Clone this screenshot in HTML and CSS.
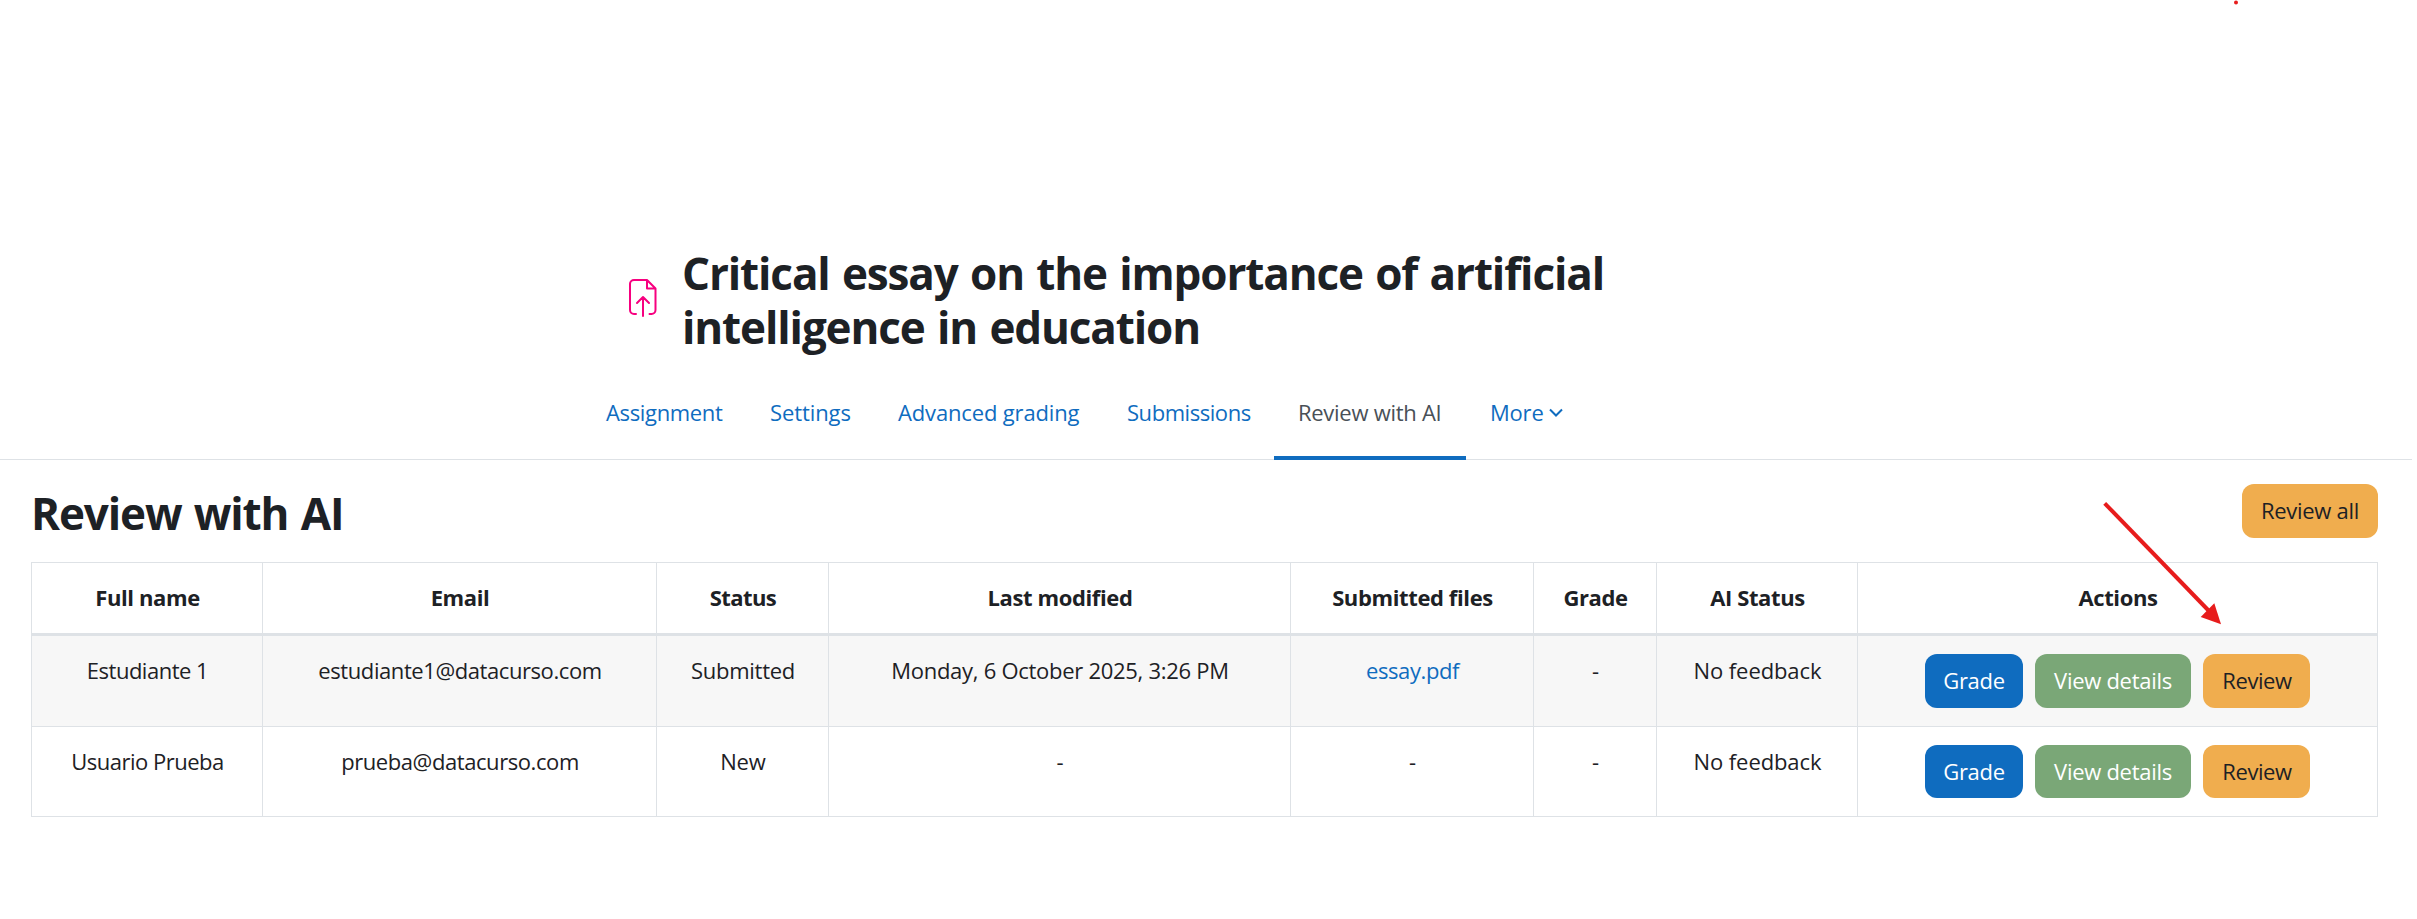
FILE: index.html
```
<!DOCTYPE html>
<html lang="en"><head><meta charset="utf-8"><title>Review with AI</title><link rel="stylesheet" href="styles.css"></head>
<body>
<header class="page-header">
  <svg class="activity-icon" viewBox="0 0 30 40" fill="none" stroke="#f7007f" stroke-width="2" stroke-linecap="round" stroke-linejoin="round"><path d="M8 36H6a4 4 0 0 1-4-4V6a4 4 0 0 1 4-4h13l8.500 8.500V32a4 4 0 0 1-4 4h-2M19 2v8.500h8.500M15 38V19M9 25l6-6 6 6"/></svg>
  <h1 class="page-title">Critical essay on the importance of artificial intelligence in education</h1>
</header>
<nav class="tabs">
  <a class="tab tab-assignment">Assignment</a><a class="tab tab-settings">Settings</a><a class="tab tab-grading">Advanced grading</a><a class="tab tab-submissions">Submissions</a><a class="tab tab-review">Review with AI</a><a class="tab tab-more">More<svg class="chevron" viewBox="0 0 14 10" fill="none" stroke="currentColor" stroke-width="2"><path d="M1 1.500l6 6 6-6"/></svg></a>
</nav>
<main class="content">
  <div class="toolbar"><h2 class="section-title">Review with AI</h2><button class="btn warning btn-all">Review all</button></div>
  <table class="grid">
    <colgroup><col class="c-name"><col class="c-email"><col class="c-status"><col class="c-date"><col class="c-files"><col class="c-grade"><col class="c-ai"><col class="c-actions"></colgroup>
    <thead><tr><th>Full name</th><th>Email</th><th class="th-status">Status</th><th>Last modified</th><th>Submitted files</th><th>Grade</th><th>AI Status</th><th>Actions</th></tr></thead>
    <tbody>
      <tr><td class="name">Estudiante 1</td><td class="email">estudiante1@datacurso.com</td><td>Submitted</td><td>Monday, 6 October 2025, 3:26 PM</td><td><a class="file">essay.pdf</a></td><td>-</td><td class="ai">No feedback</td><td class="action-cell"><div class="actions"><button class="btn primary">Grade</button><button class="btn success">View details</button><button class="btn warning btn-review">Review</button></div></td></tr>
      <tr><td class="name">Usuario Prueba</td><td class="email">prueba@datacurso.com</td><td class="ai">New</td><td>-</td><td>-</td><td>-</td><td class="ai">No feedback</td><td class="action-cell"><div class="actions"><button class="btn primary">Grade</button><button class="btn success">View details</button><button class="btn warning btn-review">Review</button></div></td></tr>
    </tbody>
  </table>
</main>
<svg class="annotation" viewBox="0 0 2417 919"><circle cx="2236" cy="2.500" r="2" fill="#e71c1c"/><path d="M2104.700 503.300L2210 612" stroke="#e71c1c" stroke-width="4"/><path d="M2221 624.300L2214.300 603.300 2200.700 617z" fill="#e71c1c"/></svg>
</body></html>
```
FILE: styles.css
```
* { box-sizing: border-box; }
body { margin: 0; width: 2417px; height: 919px; overflow: hidden; background: #fff; color: #1d2125; font-family: "Open Sans", "Noto Sans", sans-serif; font-size: 22px; letter-spacing: -0.28px; line-height: 33.75px; position: relative; }
.page-header { display: flex; align-items: flex-start; gap: 24px; padding: 246px 0 0 628px; height: 380px; }
.activity-icon { width: 30px; height: 40px; margin-top: 32px; flex: none; }
h1, h2 { margin: 0; font-size: 44px; line-height: 54px; font-weight: 700; letter-spacing: -1.12px; word-spacing: 2px; }
.page-title { width: 1000px; }
.tabs { display: flex; height: 80px; width: 2412px; padding-left: 582px; border-bottom: 1px solid #dee2e6; }
.tab { display: flex; align-items: center; height: 80px; padding: 0 24px 14px; color: #0f6cbf; white-space: nowrap; }
.tab-assignment { width: 164px; letter-spacing: -0.35px; }
.tab-settings { width: 128px; letter-spacing: -0.1px; }
.tab-grading { width: 229px; letter-spacing: -0.15px; }
.tab-submissions { width: 171px; letter-spacing: -0.45px; }
.tab-review { width: 192px; color: #495057; border-bottom: 4px solid #0f6cbf; padding-bottom: 10px; }
.tab-more { letter-spacing: -0.2px; }
.chevron { width: 14px; height: 10px; margin-left: 5px; }
.content { padding: 24px 39px 0 31px; }
.toolbar { display: flex; justify-content: space-between; align-items: flex-start; height: 78px; }
.section-title { padding-top: 2px; }
.btn { display: flex; justify-content: center; align-items: center; height: 54px; padding: 0; border: 0; border-radius: 12px; font: inherit; letter-spacing: inherit; white-space: nowrap; }
.btn-all { width: 136px; }
.warning { background: #f0ad4e; color: #1d2125; }
.primary { width: 98px; background: #0f6cbf; color: #fff; }
.success { width: 156px; background: #7aa777; color: #fff; }
.btn-review { width: 107px; padding-left: 1px; letter-spacing: -0.4px; }
.grid { width: 2347px; table-layout: fixed; border-collapse: collapse; text-align: center; }
.c-name { width: 231px; } .c-email { width: 394px; } .c-status { width: 172px; } .c-date { width: 462px; } .c-files { width: 243px; } .c-grade { width: 123px; } .c-ai { width: 201px; }
th, td { border: 1px solid #dee2e6; padding: 18px 0 18px 1px; vertical-align: top; white-space: nowrap; }
th { border-bottom-width: 3px; height: 72px; font-weight: 700; letter-spacing: -0.38px; }
.th-status { letter-spacing: -0.6px; }
td { height: 91px; }
.action-cell { padding-left: 0; }
tbody tr:first-child { background: #f7f7f7; }
tbody tr:last-child td { height: 90px; }
tbody tr:last-child .btn { height: 53px; }
.name { letter-spacing: -0.5px; }
.email { letter-spacing: -0.42px; }
.ai { letter-spacing: -0.1px; }
.file { color: #0f6cbf; letter-spacing: -0.4px; }
.actions { display: flex; justify-content: center; gap: 12px; }
.annotation { position: absolute; inset: 0; width: 2417px; height: 919px; pointer-events: none; }
```
